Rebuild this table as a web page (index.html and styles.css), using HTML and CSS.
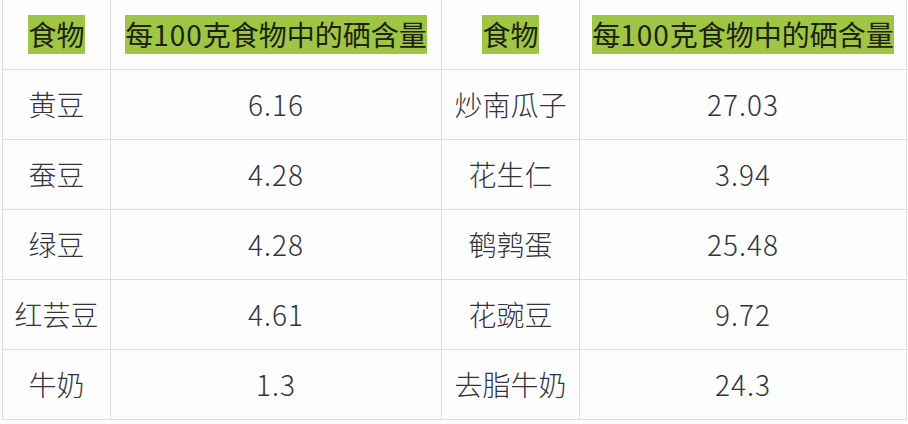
FILE: index.html
```html
<!DOCTYPE html>
<html lang="zh">
<head>
<meta charset="utf-8">
<title>食物硒含量</title>
<link rel="stylesheet" href="styles.css">
</head>
<body>
<table class="sel">
  <colgroup>
    <col class="c1"><col class="c2"><col class="c3"><col class="c4">
  </colgroup>
  <thead>
    <tr>
      <th><span class="hl">食物</span></th>
      <th><span class="hl">每<span class="num">100</span>克食物中的硒含量</span></th>
      <th><span class="hl">食物</span></th>
      <th><span class="hl">每<span class="num">100</span>克食物中的硒含量</span></th>
    </tr>
  </thead>
  <tbody>
    <tr><td>黄豆</td><td class="num">6.16</td><td>炒南瓜子</td><td class="num">27.03</td></tr>
    <tr><td>蚕豆</td><td class="num">4.28</td><td>花生仁</td><td class="num">3.94</td></tr>
    <tr><td>绿豆</td><td class="num">4.28</td><td>鹌鹑蛋</td><td class="num">25.48</td></tr>
    <tr><td>红芸豆</td><td class="num">4.61</td><td>花豌豆</td><td class="num">9.72</td></tr>
    <tr><td>牛奶</td><td class="num">1.3</td><td>去脂牛奶</td><td class="num">24.3</td></tr>
  </tbody>
</table>
</body>
</html>
```

FILE: styles.css
```css
html, body {
  margin: 0;
  padding: 0;
  background: #fdfdfe;
}
body {
  font-family: "Noto Sans CJK SC", "Noto Sans", sans-serif;
  color: #333438;
  overflow: hidden;
}
.sel {
  border-collapse: collapse;
  table-layout: fixed;
  width: 904px;
  margin: -1px 0 0 2px;
}
.c1 { width: 108px; }
.c2 { width: 331px; }
.c3 { width: 138px; }
.c4 { width: 327px; }
.sel th, .sel td {
  border: 1px solid #dcdde0;
  height: 69px;
  padding: 0;
  text-align: center;
  vertical-align: middle;
  font-size: 28px;
  font-weight: 300;
  line-height: 39px;
}
.sel th {
  font-weight: 400;
}
.num {
  letter-spacing: 1px;
}
.hl {
  display: inline-block;
  background: #9fc545;
  color: #1d2214;
  padding: 0;
  line-height: 39px;
}
```
